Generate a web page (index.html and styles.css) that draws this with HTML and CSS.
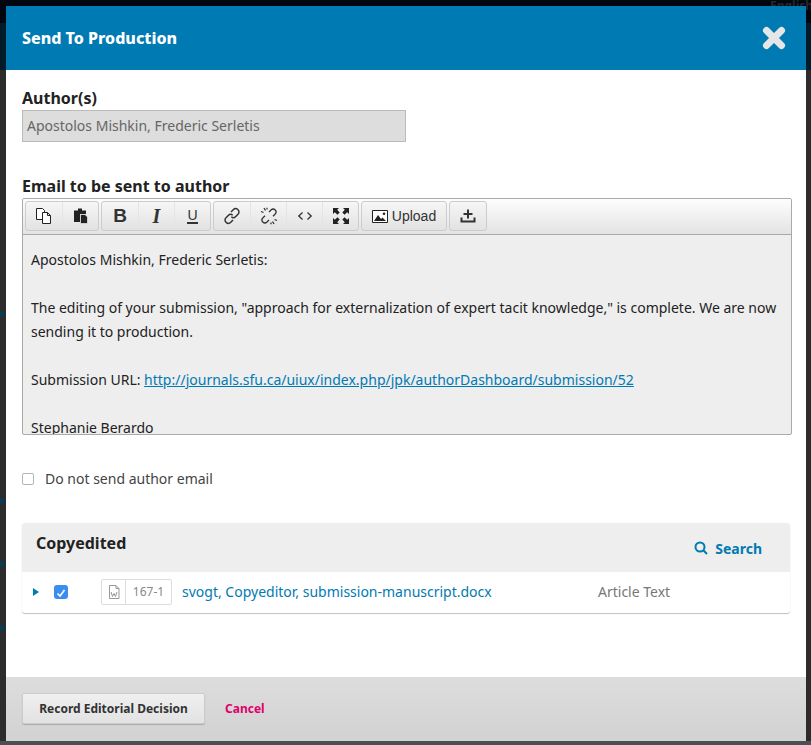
FILE: index.html
```html
<!DOCTYPE html>
<html lang="en">
<head>
    <meta charset="UTF-8">
    <meta name="viewport" content="width=device-width, initial-scale=1.0">
    <title>Send To Production</title>
    <link rel="stylesheet" href="styles.css">
</head>
<body>
    <!-- page dimmed behind the modal, only its edges show -->
    <div class="behind">
        <span class="behindLang">English</span>
        <span class="behindArrow arrow1"></span>
        <span class="behindArrow arrow2"></span>
        <span class="behindArrow arrow3"></span>
        <span class="behindArrow arrow4"></span>
    </div>

    <div class="modal">
        <div class="modalHeader">
            <h1>Send To Production</h1>
            <svg class="closeIcon" width="24" height="24" viewBox="0 0 24 24"><path d="M4.500 4.500 19.500 19.500M19.500 4.500 4.500 19.500" fill="none" stroke="#e6e6e6" stroke-width="7" stroke-linecap="round"/></svg>
        </div>

        <div class="modalBody">
            <label class="fieldLabel">Author(s)</label>
            <div class="authorInput">Apostolos Mishkin, Frederic Serletis</div>

            <label class="fieldLabel emailLabel">Email to be sent to author</label>
            <div class="editor">
                <div class="toolbar">
                    <div class="toolGroup">
                        <span class="tool"><svg width="18" height="18" viewBox="0 0 18 18" fill="#fff" stroke="#222" stroke-width="1"><path d="M1.500 1.500H7.500L9.500 3.500V12.500H1.500Z"/><path d="M7.500 5.500H12.500L15.500 8.500V16.500H7.500Z"/><path d="M12.500 5.500V8.500H15.500" fill="none"/></svg></span>
                        <span class="tool"><svg width="18" height="18" viewBox="0 0 18 18"><path d="M2 3.500H6V1.500H10V3.500H14V7H8V15H2Z" fill="#222"/><path d="M8.500 7.500H13L15.500 10V16.500H8.500Z" fill="#222" stroke="#fff" stroke-width=".6"/></svg></span>
                    </div>
                    <div class="toolGroup">
                        <span class="tool"><span class="gBold">B</span></span>
                        <span class="tool"><span class="gItalic">I</span></span>
                        <span class="tool"><span class="gUnder">U</span></span>
                    </div>
                    <div class="toolGroup">
                        <span class="tool"><svg width="18" height="18" viewBox="0 0 18 18" fill="none" stroke="#333" stroke-width="1.500"><path d="M8 5 10.500 2.500C11.800 1.200 13.800 1.300 15 2.700 16.300 4 16.300 6 15 7.200L12.500 9.700C11.300 10.900 9.500 10.800 8.300 9.700"/><path d="M10 13 7.500 15.500C6.200 16.800 4.200 16.700 3 15.300 1.700 14 1.700 12 3 10.800L5.500 8.300C6.700 7.100 8.500 7.200 9.700 8.300"/></svg></span>
                        <span class="tool"><svg width="18" height="18" viewBox="0 0 18 18" fill="none" stroke="#333" stroke-width="1.300"><path d="M9 5 11 3C12.300 1.800 14.200 2 15.200 3 16.300 4.200 16.300 6 15 7.200L13 9.200"/><path d="M9 13 7 15C5.700 16.200 3.800 16 2.800 15 1.700 13.800 1.700 12 3 10.800L5 8.800"/><path d="M4 1 5.500 3.500M1 4.500 3.500 5.500M7 .8V2.500M14 17 12.500 14.500M17 13.500 14.500 12.500M11 17.200V15.500"/></svg></span>
                        <span class="tool"><svg width="16" height="10" viewBox="0 0 16 10" fill="none" stroke="#333" stroke-width="1.300"><path d="M5.500 1.500 1.800 5 5.500 8.500"/><path d="M10.500 1.500 14.200 5 10.500 8.500"/></svg></span>
                        <span class="tool"><svg width="18" height="18" viewBox="0 0 18 18" fill="#222"><path d="M1 1H7L5.200 2.800 7.700 5.500 5.500 7.700 2.800 5.200 1 7Z"/><path d="M17 1H11L12.800 2.800 10.300 5.500 12.500 7.700 15.200 5.200 17 7Z"/><path d="M1 17H7L5.200 15.200 7.700 12.500 5.500 10.300 2.800 12.800 1 11Z"/><path d="M17 17H11L12.800 15.200 10.300 12.500 12.500 10.300 15.200 12.800 17 11Z"/></svg></span>
                    </div>
                    <div class="toolGroup">
                        <span class="tool uploadTool"><svg width="16" height="13" viewBox="0 0 16 13"><path d="M.500.500H15.500V12.500H.500Z" fill="#fff" stroke="#222"/><path d="M2 11 6 5 9 9 10.500 7.500 14 11Z" fill="#222"/><circle cx="12" cy="3.800" r="1.300" fill="#222"/></svg>Upload</span>
                    </div>
                    <div class="toolGroup">
                        <span class="tool"><svg width="18" height="16" viewBox="0 0 18 16" fill="#333"><path d="M8 1.500H10V5H13.500V7H10V10.500H8V7H4.500V5H8Z"/><path d="M1.500 9.500H3.500V12.500H14.500V9.500H16.500V14.500H1.500Z"/></svg></span>
                    </div>
                </div>
                <div class="editorText">
                    <p>Apostolos Mishkin, Frederic Serletis:</p>
                    <p>The editing of your submission, "approach for externalization of expert tacit knowledge," is complete. We are now sending it to production.</p>
                    <p>Submission URL: <a href="#">http://journals.sfu.ca/uiux/index.php/jpk/authorDashboard/submission/52</a></p>
                    <p>Stephanie Berardo</p>
                </div>
            </div>

            <label class="skipEmail"><span class="checkBox"></span>Do not send author email</label>

            <div class="filesPanel">
                <div class="filesHead">
                    <h2>Copyedited</h2>
                    <a class="searchLink" href="#"><svg width="14" height="14" viewBox="0 0 14 14" fill="none" stroke="#007ab2" stroke-width="2"><circle cx="6" cy="6" r="4.500"/><path d="M9.300 9.300 13 13"/></svg>Search</a>
                </div>
                <div class="fileRow">
                    <span class="arrow"></span>
                    <span class="checked"><svg width="14" height="14" viewBox="0 0 14 14" fill="none" stroke="#fff" stroke-width="1.700"><path d="M3.500 7.500 6 10 10.500 4"/></svg></span>
                    <span class="fileBadge">
                        <span class="fileIcon"><svg width="12" height="14" viewBox="0 0 12 14" fill="#fff" stroke="#999"><path d="M1.500 .500H8L11 3.500V13.500H1.500Z"/><path d="M8 .500V3.500H11" fill="none"/><path d="M3 7 4.500 11.500 6 8.500 7.500 11.500 9 7" fill="none" stroke="#888" stroke-width=".9"/></svg></span>
                        <span class="fileId">167-1</span>
                    </span>
                    <a class="fileName" href="#">svogt, Copyeditor, submission-manuscript.docx</a>
                    <span class="fileType">Article Text</span>
                </div>
            </div>
        </div>

        <div class="modalFooter">
            <button class="saveBtn">Record Editorial Decision</button>
            <a class="cancelLink" href="#">Cancel</a>
        </div>
    </div>
</body>
</html>
```

FILE: styles.css
```css
body{
    margin: 0;
    height: 745px;
    box-sizing: border-box;
    padding: 6px 5px 4px 6px;
    overflow: hidden;
    font-family: "Noto Sans", "Open Sans", sans-serif;
    color: #222;
    background: linear-gradient(#00060f 0, #00060f 23px, #001b2a 23px, #001b2a 70px, #2c2c2c 70px, #2c2c2c 741px, #4b4e53 741px);
}
a{
    text-decoration: none;
}
.behindLang{
    position: absolute;
    left: 770px;
    top: -3px;
    font-size: 12px;
    font-weight: 700;
    color: #23282d;
}
.behindArrow{
    position: absolute;
    left: 0;
    width: 0;
    height: 0;
    border-left: 6px solid #0c3a52;
    border-top: 4px solid transparent;
    border-bottom: 4px solid transparent;
}
.arrow1{
    top: 310px;
}
.arrow2{
    top: 497px;
}
.arrow3{
    top: 560px;
}
.arrow4{
    top: 624px;
}
.modal{
    position: relative;
    height: 735px;
    display: flex;
    flex-direction: column;
    background: #fff;
}
.modalHeader{
    height: 64px;
    flex: none;
    display: flex;
    justify-content: space-between;
    align-items: center;
    padding: 0 20px 0 16px;
    background: #007ab2;
}
.modalHeader h1{
    margin: 0;
    font-size: 16px;
    font-weight: 800;
    color: #fff;
}
.modalBody{
    flex: 1;
    padding: 18px 16px 0;
}
.fieldLabel{
    display: block;
    font-size: 16px;
    font-weight: 700;
    line-height: 20px;
}
.authorInput{
    width: 378px;
    height: 30px;
    margin-top: 2px;
    padding-left: 4px;
    border: 1px solid #bbb;
    background: #ddd;
    color: #666;
    font-size: 14px;
    line-height: 30px;
}
.emailLabel{
    margin-top: 34px;
}
.editor{
    width: 770px;
    height: 237px;
    margin-top: 2px;
    display: flex;
    flex-direction: column;
    box-sizing: border-box;
    border: 1px solid #aaa;
    border-radius: 2px;
    background: #eee;
    overflow: hidden;
}
.toolbar{
    height: 36px;
    flex: none;
    display: flex;
    gap: 2px;
    padding: 2px 2px 0;
    box-sizing: border-box;
    border-bottom: 1px solid #aaa;
    background: linear-gradient(#fdfdfd, #e3e3e3);
}
.toolGroup{
    height: 30px;
    display: flex;
    box-sizing: border-box;
    border: 1px solid #ccc;
    border-radius: 3px;
    background: linear-gradient(#f6f6f6, #e2e2e2);
}
.tool{
    width: 36px;
    display: flex;
    justify-content: center;
    align-items: center;
    box-sizing: border-box;
    border-left: 1px solid #e4e4e4;
    font-family: "Liberation Sans", sans-serif;
    color: #333;
}
.tool:first-child{
    border-left: 0;
}
.gBold{
    font-size: 19px;
    font-weight: 700;
}
.gItalic{
    font-family: "Liberation Serif", serif;
    font-size: 20px;
    font-weight: 700;
    font-style: italic;
}
.gUnder{
    font-size: 14px;
    line-height: 13px;
    border-bottom: 2px solid #333;
}
.uploadTool{
    width: 84px;
    gap: 4px;
    font-size: 14px;
}
.editorText{
    flex: 1;
    overflow: hidden;
    padding: 13px 8px 0;
    font-size: 14px;
    line-height: 24px;
    color: #222;
}
.editorText p{
    margin: 0 0 24px;
}
.editorText p:last-child{
    margin: 0;
}
.editorText a{
    color: #007ab2;
    text-decoration: underline;
}
.skipEmail{
    display: flex;
    align-items: center;
    margin-top: 34px;
    font-size: 14px;
    line-height: 20px;
    color: #444;
}
.checkBox{
    width: 10px;
    height: 10px;
    margin-right: 11px;
    border: 1px solid #b5b5b5;
    border-radius: 2px;
    background: #fff;
}
.filesPanel{
    width: 768px;
    margin-top: 34px;
    border-radius: 3px;
    box-shadow: 0 1px 1px rgba(0,0,0,.25);
}
.filesHead{
    height: 49px;
    display: flex;
    justify-content: space-between;
    padding: 9px 28px 0 14px;
    box-sizing: border-box;
    border-radius: 3px 3px 0 0;
    background: #eee;
}
.filesHead h2{
    margin: 0;
    font-size: 16px;
    line-height: 22px;
    font-weight: 700;
}
.searchLink{
    display: flex;
    align-items: center;
    gap: 7px;
    height: 32px;
    font-size: 14px;
    font-weight: 700;
    color: #007ab2;
}
.fileRow{
    height: 41px;
    display: flex;
    align-items: center;
    font-size: 14px;
}
.arrow{
    width: 0;
    height: 0;
    margin: -2px 0 0 11px;
    border-left: 6px solid #007ab2;
    border-top: 4px solid transparent;
    border-bottom: 4px solid transparent;
}
.checked{
    width: 14px;
    height: 14px;
    margin: -2px 0 0 15px;
    border-radius: 3px;
    background: #3b8df0;
}
.fileBadge{
    height: 26px;
    display: flex;
    margin: -2px 0 0 33px;
    box-sizing: border-box;
    border: 1px solid #ddd;
    border-radius: 2px;
    font-size: 12px;
    line-height: 24px;
    color: #888;
}
.fileIcon{
    width: 23px;
    display: flex;
    justify-content: center;
    align-items: center;
    border-right: 1px solid #ddd;
}
.fileId{
    width: 45px;
    text-align: center;
}
.fileName{
    width: 416px;
    margin: -2px 0 0 10px;
    color: #007ab2;
}
.fileType{
    margin-top: -2px;
    font-size: 14px;
    color: #777;
}
.modalFooter{
    height: 64px;
    flex: none;
    display: flex;
    align-items: center;
    box-sizing: border-box;
    padding: 0 16px 2px;
    background: linear-gradient(#ddd, #d2d2d2);
}
.saveBtn{
    width: 183px;
    height: 31px;
    padding: 0;
    border: 1px solid #ccc;
    border-radius: 2px;
    background: linear-gradient(#f0f0f0, #e2e2e2);
    box-shadow: 0 1px 1px rgba(0,0,0,.2);
    font-family: inherit;
    font-size: 12px;
    font-weight: 700;
    color: #333;
}
.cancelLink{
    margin-left: 20px;
    font-size: 12px;
    font-weight: 700;
    color: #e0006b;
}
```
